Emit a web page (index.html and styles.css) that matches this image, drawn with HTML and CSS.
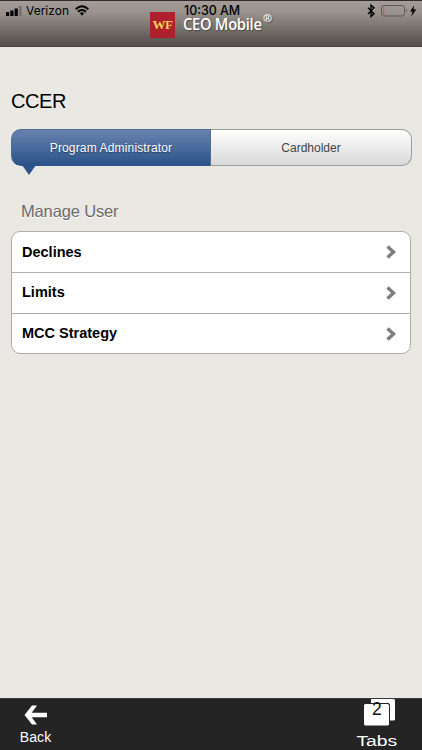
FILE: index.html
```html
<!DOCTYPE html>
<html lang="en">
<head>
<meta charset="utf-8">
<title>CEO Mobile</title>
<link rel="stylesheet" href="styles.css">
</head>
<body>
<div class="app">
  <header class="header">
    <div class="brand">
      <span class="logo"><span>WF</span></span>
      <span class="brand-name">CEO Mobile</span><span class="reg">®</span>
    </div>
    <div class="status">
      <div class="carrier">
        <svg class="signal" width="16" height="10" viewBox="0 0 16 10"><path d="M0 6h3.200v4H0zM4.300 4.500h3.200v5.500h-3.200zM8.600 2.500h3.200v7.500h-3.200z"/><path d="M12.900 0h2.800v10h-2.800z" fill="#77716e"/></svg>
        <span class="carrier-name">Verizon</span>
        <svg class="wifi" width="14" height="11" viewBox="0 0 14 11"><g fill="none" stroke="#000" stroke-width="2"><path d="M.7 4.200Q7-1.800 13.300 4.200"/><path d="M3 6.700Q7 3.200 11 6.700"/></g><path d="M4.700 8.100Q7 6.500 9.300 8.100L7 10.700z"/></svg>
      </div>
      <span class="time">10:30 AM</span>
      <div class="power">
        <svg width="50" height="14" viewBox="0 0 50 14"><path d="M1 3.700l6 6.100-3 2.700V1.200l3 2.700-6 6" fill="none" stroke="#000" stroke-width="1.400"/><rect x="14.500" y="1.500" width="23" height="10.500" rx="2.300" fill="none" stroke="#5f5955"/><path d="M16 3h1.300v7.500H16z" fill="#e34e4b"/><path d="M39 4.700q2 1.800 0 3.600z" fill="#5f5955"/><path d="M47.300 1.200L43 7.400h2.500l-1.200 5 5-6.800h-2.800z"/></svg>
      </div>
    </div>
  </header>
  <main class="content">
    <h1 class="title">CCER</h1>
    <div class="tabs">
      <div class="tab active"><span>Program Administrator</span></div>
      <div class="tab"><span>Cardholder</span></div>
    </div>
    <h2 class="section">Manage User</h2>
    <ul class="list">
      <li><span>Declines</span><svg width="10" height="14" viewBox="0 0 10 14"><path d="M1.500 1.500L7.500 7l-6 5.500"/></svg></li>
      <li><span>Limits</span><svg width="10" height="14" viewBox="0 0 10 14"><path d="M1.500 1.500L7.500 7l-6 5.500"/></svg></li>
      <li><span>MCC Strategy</span><svg width="10" height="14" viewBox="0 0 10 14"><path d="M1.500 1.500L7.500 7l-6 5.500"/></svg></li>
    </ul>
  </main>
  <footer class="footer">
    <div class="nav back">
      <svg width="24" height="20" viewBox="0 0 24 20"><path d="M.5 10L8 .5h5L7.700 7.700H23v4.600H7.700l5.300 7.200H8z" fill="#fff"/></svg>
      <span>Back</span>
    </div>
    <div class="nav windows">
      <div class="pages">
        <svg width="32" height="28" viewBox="0 0 32 28"><path d="M7 0h22.500q1.500 0 1.500 1.500v18.500q0 1.500-1.500 1.500H20V0z" fill="#fff"/><rect x="-.5" y="4.500" width="26" height="22.500" rx="2" fill="#fff" stroke="#242424"/><path d="M7 0h16v6H7z" fill="#fff"/><path d="M6.500 4.500H24q1.500 0 1.500 1.500" fill="none" stroke="#242424"/></svg>
        <span class="count">2</span>
      </div>
      <span class="windows-label">Tabs</span>
    </div>
  </footer>
</div>
</body>
</html>
```

FILE: styles.css
```css
* { box-sizing: border-box; }
body {
  margin: 0;
  font-family: "Liberation Sans", Arial, sans-serif;
  background: #e9e8e2;
}
.app { height: 750px; display: flex; flex-direction: column; overflow: hidden; }

.header {
  position: relative;
  height: 47px;
  border-top: 1px solid #332b2c;
  border-bottom: 1px solid #484440;
  background: linear-gradient(#a39c98, #99928e 25%, #534e49);
}
.brand { display: flex; align-items: flex-start; padding: 11px 0 0 150px; color: #fff; }
.logo {
  width: 25px; height: 26px;
  background: #ae202b; color: #fbd257;
  font: bold 13px/25px "Liberation Serif", serif;
  text-align: center;
}
.logo span { display: inline-block; letter-spacing: -.5px; }
.brand-name {
  width: 79px;
  margin: 5px 0 0 8px;
  font: 600 16px/14px "Open Sans", sans-serif;
  letter-spacing: -.3px;
  white-space: nowrap;
  transform: scaleX(.92);
  transform-origin: left;
  text-shadow: 1px 1px 1px #514b47;
}
.reg { margin-left: 1px; font: bold 11px/11px "Open Sans", sans-serif; text-shadow: 1px 1px 1px #514b47; }
.status {
  position: absolute; inset: 0 0 auto;
  display: grid; grid-template-columns: 184px 1fr 56px;
  height: 20px;
  color: #000;
}
.carrier { display: flex; align-items: flex-start; padding-left: 6px; }
.signal { margin-top: 5px; }
.carrier-name { margin-left: 4px; font: 12px/20px Inter, sans-serif; width: 43px; }
.wifi { margin: 4px 0 0 6px; }
.time { font: 500 12.400px/14px Inter, sans-serif; padding-top: 3px; }
.power { padding-top: 3px; padding-left: 1px; }
.power svg, .pages svg { display: block; }

.content { flex: 1; padding: 42px 10px 0 11px; }
.title { margin: 0; font-size: 20px; font-weight: 400; line-height: 24px; letter-spacing: -.4px; }
.tabs { display: flex; height: 37px; margin-top: 16px; }
.tab {
  flex: 1;
  border: 1px solid #9c9c9c;
  border-left: 0;
  border-radius: 0 10px 10px 0;
  background: linear-gradient(#fefefe, #d9d9d9);
  color: #454545;
  font-size: 12px; line-height: 36px; text-align: center;
}
.tab.active {
  position: relative;
  flex: 0 0 200px;
  border: 1px solid #526b94;
  border-bottom-color: #315486;
  border-radius: 10px 0 0 10px;
  background: linear-gradient(#6882af, #2b5389);
  color: #fff;
  letter-spacing: .15px;
  text-shadow: 0 1px 1px #263e62;
}
.tab.active::after {
  content: "";
  position: absolute; left: 10px; top: 35px;
  border: 7px solid transparent;
  border-top: 10px solid #2b5389;
  border-bottom: 0;
}
.section { margin: 35px 0 0 10px; font-size: 16.500px; font-weight: 400; line-height: 20px; letter-spacing: -.15px; color: #6a6a6a; text-shadow: 0 1px #fff; }
.list {
  margin: 10px 0 0; padding: 0;
  width: 400px; height: 123px;
  list-style: none;
  border: 1px solid #aeadab;
  border-radius: 9px;
  background: #fff;
}
.list li {
  display: flex; align-items: center; justify-content: space-between;
  height: 40px;
  padding: 0 14px 0 10px;
  font-size: 14.500px; font-weight: 700;
}
.list li + li { height: 41px; padding-bottom: 1px; border-top: 1px solid #aeadab; }
.list li span { margin-top: -1px; }
.list path { fill: none; stroke: #7d7d7d; stroke-width: 3.400; }

.footer {
  display: flex; justify-content: space-between;
  height: 52px;
  border-top: 1px solid #3a3a39;
  background: #242424;
  color: #fff;
}
.nav { display: flex; flex-direction: column; align-items: center; }
.back { width: 71px; padding-top: 6px; font-size: 14px; line-height: 16px; letter-spacing: .1px; }
.back span { margin-top: 4px; }
.windows { width: 90px; }
.pages { position: relative; width: 32px; height: 28px; margin-left: 6px; }
.count { position: absolute; left: 8px; top: 1px; color: #111; font-size: 17.500px; line-height: 19px; }
.windows-label { margin-top: 5px; font-size: 14px; line-height: 18px; transform: scaleX(1.38); }
```
